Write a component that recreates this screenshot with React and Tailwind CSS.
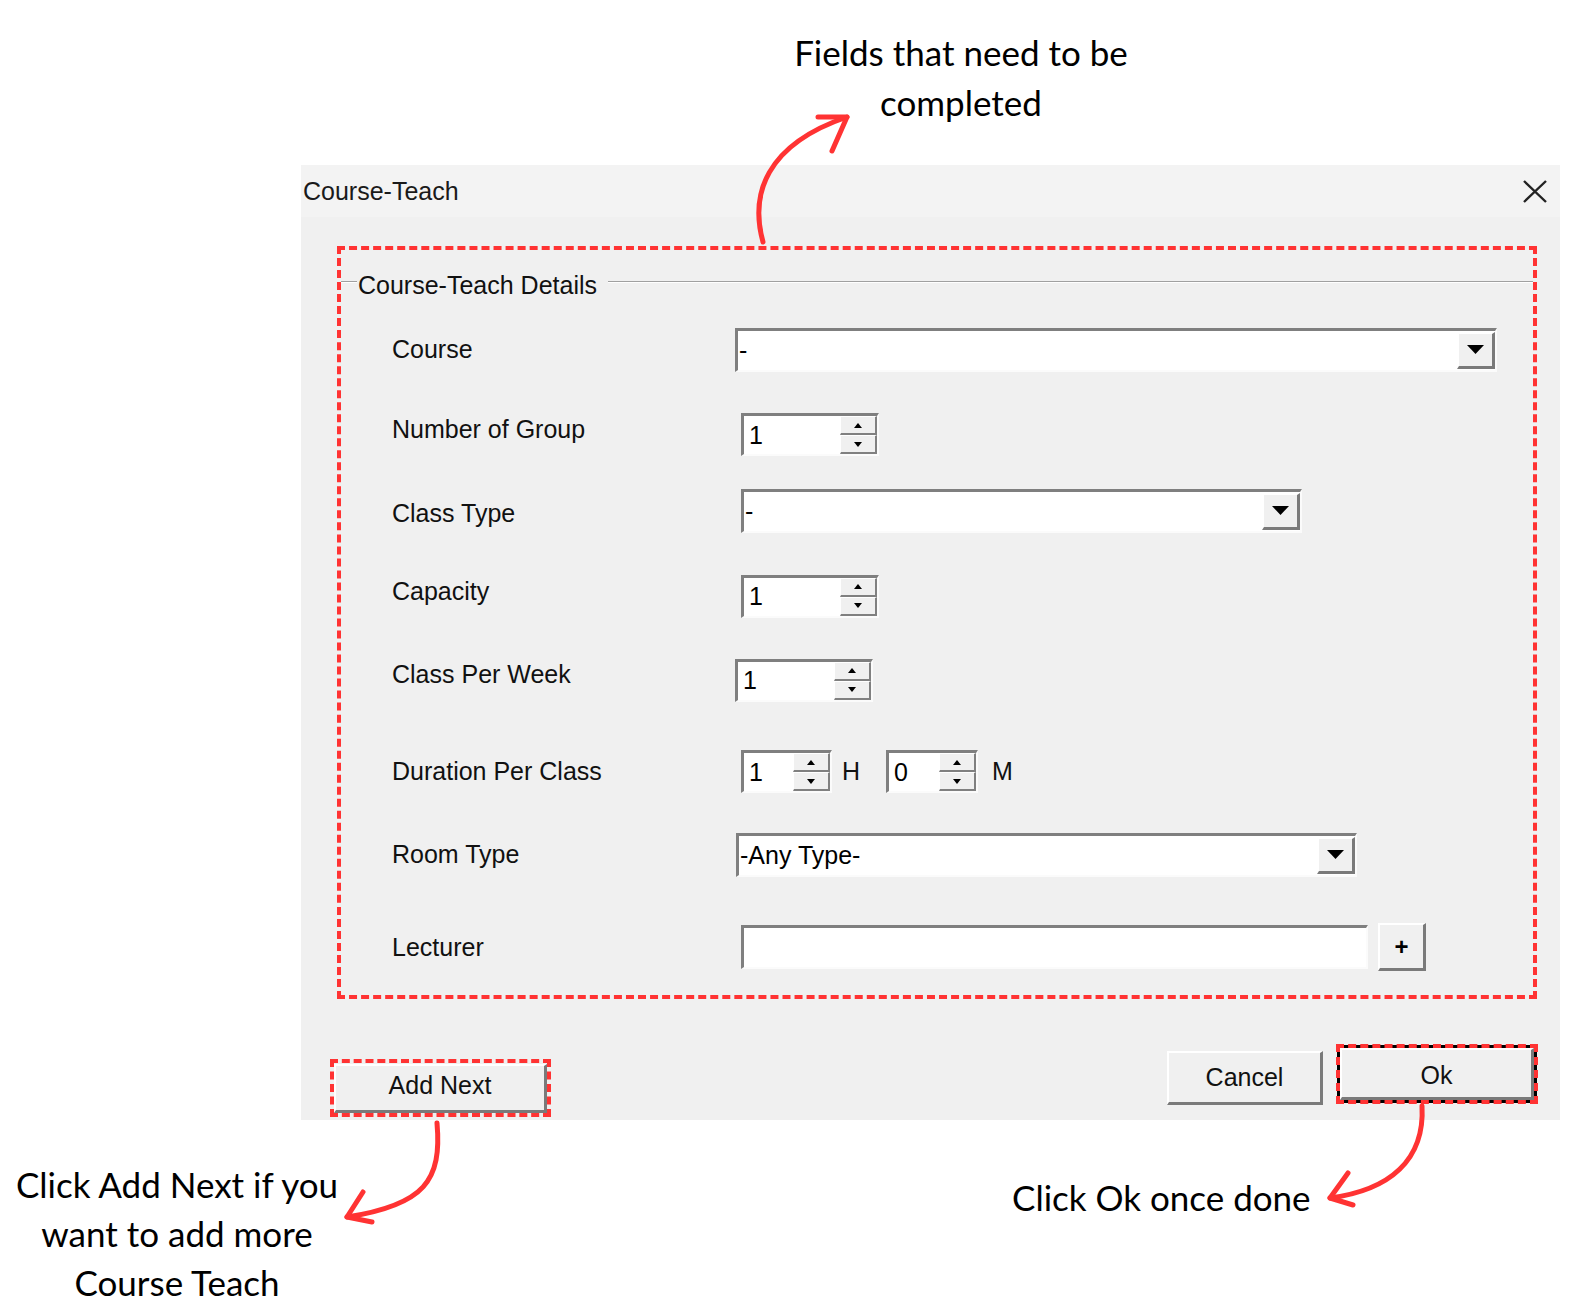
const raised =
  "bg-[#f0f0f0] border-t-2 border-l-2 border-r-[3px] border-b-[3px] border-t-white border-l-white border-r-[#7a7a7a] border-b-[#7a7a7a]";
const raisedSm =
  "bg-[#f0f0f0] border-t border-l border-r-2 border-b-2 border-t-white border-l-white border-r-[#808080] border-b-[#808080]";
const sunken =
  "bg-white border-t-[3px] border-l-[3px] border-r-2 border-b-2 border-t-[#7f7f7f] border-l-[#7f7f7f] border-r-[#fbfbfb] border-b-[#fbfbfb]";

function Tri({ up, big }) {
  if (big) {
    return (
      <svg width="17" height="9" viewBox="0 0 17 9">
        <polygon points="0,0 17,0 8.5,9" fill="#000" />
      </svg>
    );
  }
  return (
    <svg width="8" height="5" viewBox="0 0 8 5">
      <polygon points={up ? "4,0 8,5 0,5" : "0,0 8,0 4,5"} fill="#000" />
    </svg>
  );
}

function Combo({ w, text }) {
  return (
    <div className={`flex h-[44px] ${w} ${sunken}`}>
      <div className="flex flex-1 items-center pl-[1px] text-[25px] leading-none text-black">
        {text}
      </div>
      <div className={`mt-[1px] mb-[1px] flex w-[38px] items-center justify-center ${raised}`}>
        <Tri big />
      </div>
    </div>
  );
}

function Spin({ value, w = "w-[138px]" }) {
  return (
    <div className={`flex h-[43px] ${w} ${sunken}`}>
      <div className="flex flex-1 items-center pl-[5px] text-[25px] leading-none text-black">
        {value}
      </div>
      <div className="flex w-[37px] flex-col">
        <div className={`flex flex-1 items-center justify-center ${raisedSm}`}>
          <Tri up />
        </div>
        <div className={`flex flex-1 items-center justify-center ${raisedSm}`}>
          <Tri />
        </div>
      </div>
    </div>
  );
}

function Row({ cls, label, labelFix = "", shift = "", children }) {
  return (
    <div className={`flex items-center ${cls}`}>
      <div
        className={`w-[400px] shrink-0 pl-[51px] text-[25px] leading-none text-[#111] ${labelFix}`}
      >
        {label}
      </div>
      <div className={`flex items-center ${shift}`}>{children}</div>
    </div>
  );
}

function Arrows() {
  return (
    <svg
      className="pointer-events-none absolute left-0 top-0"
      width="1574"
      height="1306"
      viewBox="0 0 1574 1306"
      fill="none"
      stroke="#ff3333"
      strokeWidth="5"
      strokeLinecap="round"
      strokeLinejoin="round"
    >
      <path d="M763 242 C750 195, 765 145, 847 117" />
      <path d="M818 117 L847 117 L832 151" />
      <path d="M437 1123 C442 1180, 425 1205, 347 1217" />
      <path d="M363 1192 L347 1217 L372 1222" />
      <path d="M1422 1106 C1425 1160, 1390 1190, 1330 1198" />
      <path d="M1348 1173 L1330 1198 L1353 1205" />
    </svg>
  );
}

export default function App() {
  return (
    <div className="relative h-[1306px] w-[1574px] overflow-hidden bg-white font-['Liberation_Sans',Arial,sans-serif]">
      {/* top note */}
      <div className="h-[165px] pt-[27px]">
        <p className="ml-[761px] w-[400px] text-center font-['Lato',sans-serif] text-[35px] leading-[50px] text-black">
          Fields that need to be
          <br />
          completed
        </p>
      </div>

      {/* dialog */}
      <div className="ml-[301px] h-[955px] w-[1259px] bg-[#f0f0f0]">
        <div className="flex h-[52px] items-center justify-between bg-[#f3f3f3] pl-[2px] pr-[13px]">
          <span className="text-[25px] leading-none text-[#1a1a1a]">Course-Teach</span>
          <svg width="24" height="23" viewBox="0 0 24 23" stroke="#222" strokeWidth="2.4">
            <path d="M1 1 L23 22 M23 1 L1 22" />
          </svg>
        </div>

        <div className="ml-[36px] mt-[29px] h-[753px] w-[1200px] border-4 border-dashed border-[#ff3333]">
          <div className="mt-[21px] flex h-[28px] items-center">
            <div className="mb-[6px] h-[2px] w-[16px] border-t border-b border-t-[#a0a0a0] border-b-white" />
            <div className="px-[1px] text-[25px] leading-none text-[#111]">Course-Teach Details</div>
            <div className="mb-[6px] ml-[10px] h-[2px] flex-1 border-t border-b border-t-[#a0a0a0] border-b-white" />
          </div>

          <Row cls="mt-[29px] h-[43px]" label="Course" shift="-ml-[6px]">
            <Combo w="w-[762px]" text="-" />
          </Row>
          <Row cls="mt-[42px] h-[43px]" label="Number of Group" labelFix="mb-[10px]">
            <Spin value="1" />
          </Row>
          <Row cls="mt-[32px] h-[45px]" label="Class Type" labelFix="mt-[6px]">
            <Combo w="w-[561px]" text="-" />
          </Row>
          <Row cls="mt-[41px] h-[44px]" label="Capacity" labelFix="mb-[10px]">
            <Spin value="1" />
          </Row>
          <Row cls="mt-[40px] h-[44px]" label="Class Per Week" labelFix="mb-[12px]" shift="-ml-[6px]">
            <Spin value="1" />
          </Row>
          <Row cls="mt-[48px] h-[43px]" label="Duration Per Class">
            <Spin value="1" w="w-[91px]" />
            <span className="ml-[10px] text-[25px] leading-none text-[#111]">H</span>
            <div className="ml-[26px]">
              <Spin value="0" w="w-[92px]" />
            </div>
            <span className="ml-[14px] text-[25px] leading-none text-[#111]">M</span>
          </Row>
          <Row cls="mt-[39px] h-[45px]" label="Room Type" shift="-ml-[5px]">
            <Combo w="w-[621px]" text="-Any Type-" />
          </Row>
          <Row cls="mt-[46px] h-[48px]" label="Lecturer">
            <div className={`h-[44px] w-[627px] ${sunken}`} />
            <div
              className={`ml-[10px] flex h-[48px] w-[48px] items-center justify-center text-[24px] font-bold leading-none text-black ${raised}`}
            >
              +
            </div>
          </Row>
        </div>

        <div className="mt-[46px] flex items-start justify-between pl-[29px] pr-[23px]">
          <div className="mt-[14px] h-[58px] w-[221px] border-4 border-dashed border-[#ff3333] pt-[1px]">
            <div className={`flex h-full items-center justify-center pb-[6px] text-[25px] leading-none text-[#111] ${raised}`}>
              Add Next
            </div>
          </div>
          <div className="flex items-start gap-[14px]">
            <div
              className={`mt-[6px] flex h-[54px] w-[156px] items-center justify-center text-[25px] leading-none text-[#111] ${raised}`}
            >
              Cancel
            </div>
            <div className="h-[58px] w-[200px] border-[3px] border-black outline-4 outline-dashed outline-[#ff3333] outline-offset-[-3px]">
              <div className={`flex h-full items-center justify-center pt-[4px] text-[25px] leading-none text-[#111] ${raised}`}>
                Ok
              </div>
            </div>
          </div>
        </div>
      </div>

      {/* bottom notes */}
      <div className="flex font-['Lato',sans-serif] text-[35px] leading-[49px] text-black">
        <p className="mt-[40px] w-[354px] text-center">
          Click Add Next if you
          <br />
          want to add more
          <br />
          Course Teach
        </p>
        <p className="ml-[658px] mt-[53px]">Click Ok once done</p>
      </div>

      <Arrows />
    </div>
  );
}
